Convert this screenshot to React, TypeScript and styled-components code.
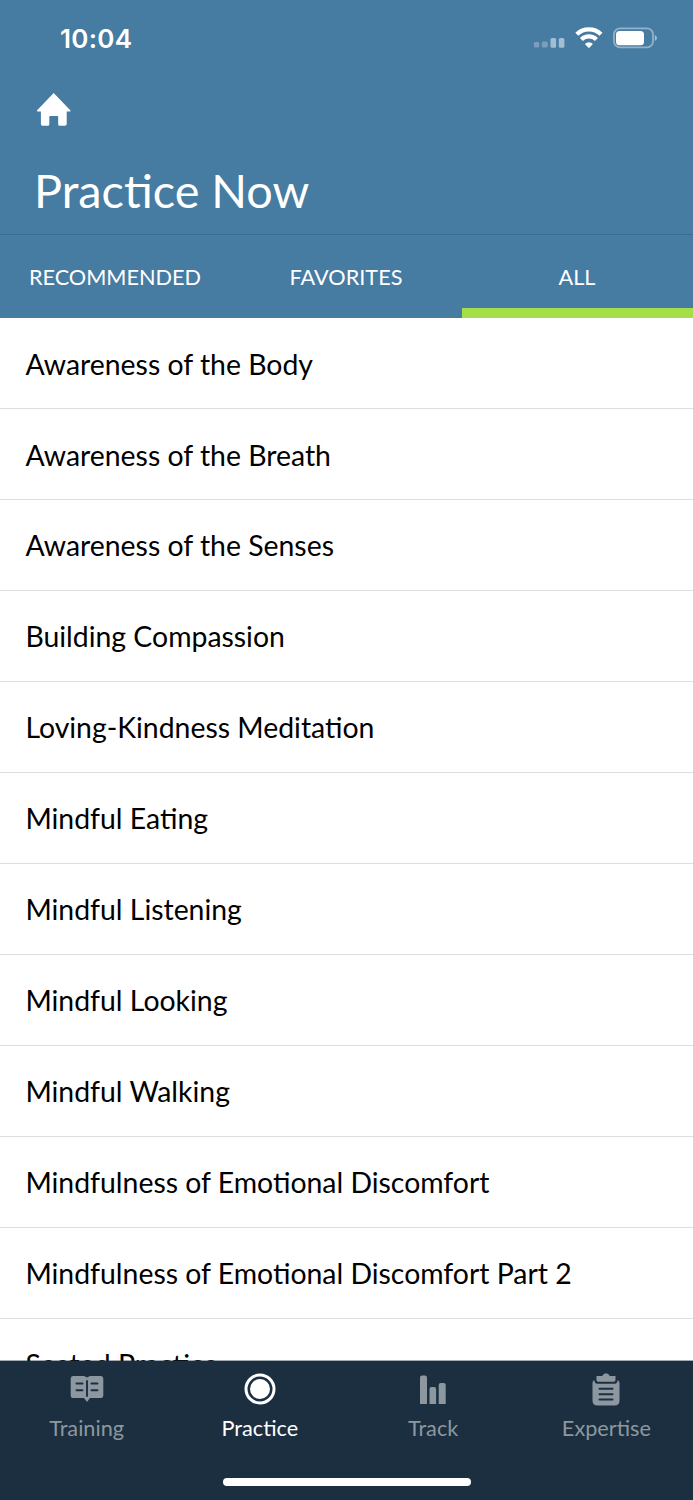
import React from "react";
import styled, { createGlobalStyle } from "styled-components";

const Global = createGlobalStyle`
  * { box-sizing: border-box; }
  body { margin: 0; background: #fff; font-family: Lato, "Open Sans", sans-serif; }
`;

const Screen = styled.div`
  width: 693px;
  height: 1500px;
  display: flex;
  flex-direction: column;
  overflow: hidden;
  background: #fff;
`;

const Header = styled.header`
  flex: none;
  height: 235px;
  background: #467ba2;
  color: #fff;
  border-bottom: 1px solid #3b6b8e;
`;

const StatusBar = styled.div`
  height: 76px;
  padding: 0 36px 0 60px;
  display: flex;
  align-items: center;
  justify-content: space-between;
`;

const Clock = styled.span`
  padding-top: 1px;
  font: 600 26px/32px Inter, sans-serif;
  letter-spacing: 0.3px;
`;

const StatusIcons = styled.svg`
  display: block;
  width: 125px;
  height: 24px;
`;

const HomeIcon = styled.svg`
  display: block;
  margin: 16px 0 0 36px;
  width: 35px;
  height: 35px;
`;

const Title = styled.h1`
  margin: 35px 0 0 34px;
  font-weight: 400;
  font-size: 46.8px;
  line-height: 56px;
  white-space: nowrap;
`;

const Tabs = styled.nav`
  flex: none;
  display: grid;
  grid-template-columns: repeat(3, 1fr);
  height: 83px;
  background: #467ba2;
`;

const Tab = styled.div<{ $active?: boolean }>`
  display: flex;
  align-items: center;
  justify-content: center;
  height: 83px;
  padding: ${(p) => (p.$active ? 10 : 0)}px 1px 0 0;
  border-bottom: ${(p) => (p.$active ? "10px solid #a5df47" : "0")};
  color: #fff;
  font-size: 21.7px;
  line-height: 28px;
`;

const List = styled.ul`
  flex: 1;
  min-height: 0;
  margin: 0;
  padding: 0.3px 0 0;
  overflow: hidden;
  list-style: none;
`;

const Row = styled.li`
  height: 90.94px;
  padding: 0.6px 25px 0 25.4px;
  display: flex;
  align-items: center;
  border-bottom: 1px solid #dedede;
  color: #000;
  font-size: 28.4px;
  line-height: 36px;
`;

const BottomBar = styled.footer`
  flex: none;
  position: relative;
  height: 140px;
  margin-top: -1px;
  background: #1b2f40;
  background-clip: padding-box;
  border-top: 1px solid rgba(27, 47, 64, 0.4);
  display: flex;
  flex-direction: column;
  align-items: center;
`;

const NavItems = styled.nav`
  width: 100%;
  height: 117px;
  display: grid;
  grid-template-columns: repeat(4, 1fr);
`;

const NavItem = styled.div<{ $active?: boolean }>`
  display: flex;
  flex-direction: column;
  align-items: center;
  padding-top: 10px;
  color: ${(p) => (p.$active ? "#fff" : "#8d979f")};
  font-size: 21.7px;
  line-height: 28px;
`;

const NavIcon = styled.svg`
  display: block;
  width: 36px;
  height: 36px;
  margin-bottom: 7px;
`;

const HomeIndicator = styled.div`
  width: 248px;
  height: 8px;
  border-radius: 4px;
  background: #fff;
`;

const sessions = [
  "Awareness of the Body",
  "Awareness of the Breath",
  "Awareness of the Senses",
  "Building Compassion",
  "Loving-Kindness Meditation",
  "Mindful Eating",
  "Mindful Listening",
  "Mindful Looking",
  "Mindful Walking",
  "Mindfulness of Emotional Discomfort",
  "Mindfulness of Emotional Discomfort Part 2",
  "Seated Practice",
];

const Status = () => (
  <StatusIcons viewBox="0 0 125 24" fill="#fff">
    <rect x="1.800" y="16" width="5.5" height="5.5" rx="1.5" opacity=".28" />
    <rect x="9.800" y="15.500" width="6" height="6" rx="1.5" opacity=".28" />
    <rect x="18.500" y="12" width="5.6" height="9.8" rx="1.5" opacity=".5" />
    <rect x="26.800" y="12" width="5.6" height="9.8" rx="1.5" opacity=".5" />
    <g fill="none" stroke="#fff" strokeWidth="4.300">
      <path d="M44.8 8.300a17.500 17.500 0 0 1 24.200 0" />
      <path d="M49.400 13.500a10.800 10.800 0 0 1 15 0" />
    </g>
    <path d="M52.900 18a5.600 5.600 0 0 1 8 0l-4 4.200z" />
    <rect x="82" y="2.400" width="39" height="19" rx="6" fill="none" stroke="#fff" strokeWidth="1.8" opacity=".42" />
    <rect x="84" y="4.900" width="28" height="14.300" rx="3.5" />
    <path d="M122.800 9q2.200 1 2.200 3t-2.200 3z" opacity=".5" />
  </StatusIcons>
);

const Training = () => (
  <NavIcon viewBox="0 0 36 36">
    <path fill="currentColor" d="M4 5h11l3 1.500L21 5h11q2.300 0 2.300 2.500v17Q34.300 27 32 27H21l-3 4-3-4H4q-2.300 0-2.300-2.500v-17Q1.700 5 4 5z" />
    <path stroke="#1b2f40" strokeWidth="1.900" strokeLinecap="round" d="M18 10v15M7.500 12.500h6M22.500 12.500h6M7.500 19.300h6M22.500 19.300h6" />
  </NavIcon>
);

const Practice = () => (
  <NavIcon viewBox="0 0 36 36">
    <circle cx="18" cy="18" r="14" fill="none" stroke="currentColor" strokeWidth="3" />
    <circle cx="18" cy="18" r="10" fill="currentColor" />
  </NavIcon>
);

const Track = () => (
  <NavIcon viewBox="0 0 36 36" fill="currentColor">
    <path d="M5 33V6.500Q5 4.500 7 4.500h3q2 0 2 2V33z" />
    <path d="M14.500 33V18q0-2 2-2h2.600q2 0 2 2v15z" />
    <path d="M23.700 33V14q0-2 2-2h3q2 0 2 2v19z" />
  </NavIcon>
);

const Expertise = () => (
  <NavIcon viewBox="0 0 36 36">
    <path fill="currentColor" d="M8.500 5h5.700Q15.500 2.200 18 2.200T21.800 5h5.700v4q0 1.700-1.700 1.700H10.200q-1.700 0-1.700-1.700z" />
    <path fill="currentColor" d="M6.300 9Q4.500 9.800 4.500 12v17.500q0 5 5 5h17q5 0 5-5V12q0-2.200-1.800-3-.2 3.700-3 3.700H9.300q-2.800 0-3-3.700z" />
    <path stroke="#1b2f40" strokeWidth="2" strokeLinecap="round" d="M11.500 17.700h13M11.500 23.200h13M11.500 28.500h13" />
  </NavIcon>
);

export default function App() {
  return (
    <Screen>
      <Global />
      <Header>
        <StatusBar>
          <Clock>10:04</Clock>
          <Status />
        </StatusBar>
        <HomeIcon viewBox="0 0 35 35">
          <path fill="#fff" d="M17.700 1 34.500 18.500q.2.900-.8.900H30.700V32q0 1.700-1.700 1.700H23.700q-1.500 0-1.500-1.500V25q0-1-1-1H14.300q-1 0-1 1v7.200q0 1.500-1.500 1.500H6.500Q4.900 33.700 4.900 32V19.400H1.800q-1 0-.9-.9z" />
        </HomeIcon>
        <Title>Practice Now</Title>
      </Header>
      <Tabs>
        <Tab>RECOMMENDED</Tab>
        <Tab>FAVORITES</Tab>
        <Tab $active>ALL</Tab>
      </Tabs>
      <List>
        {sessions.map((name) => (
          <Row key={name}>{name}</Row>
        ))}
      </List>
      <BottomBar>
        <NavItems>
          <NavItem><Training />Training</NavItem>
          <NavItem $active><Practice />Practice</NavItem>
          <NavItem><Track />Track</NavItem>
          <NavItem><Expertise />Expertise</NavItem>
        </NavItems>
        <HomeIndicator />
      </BottomBar>
    </Screen>
  );
}
